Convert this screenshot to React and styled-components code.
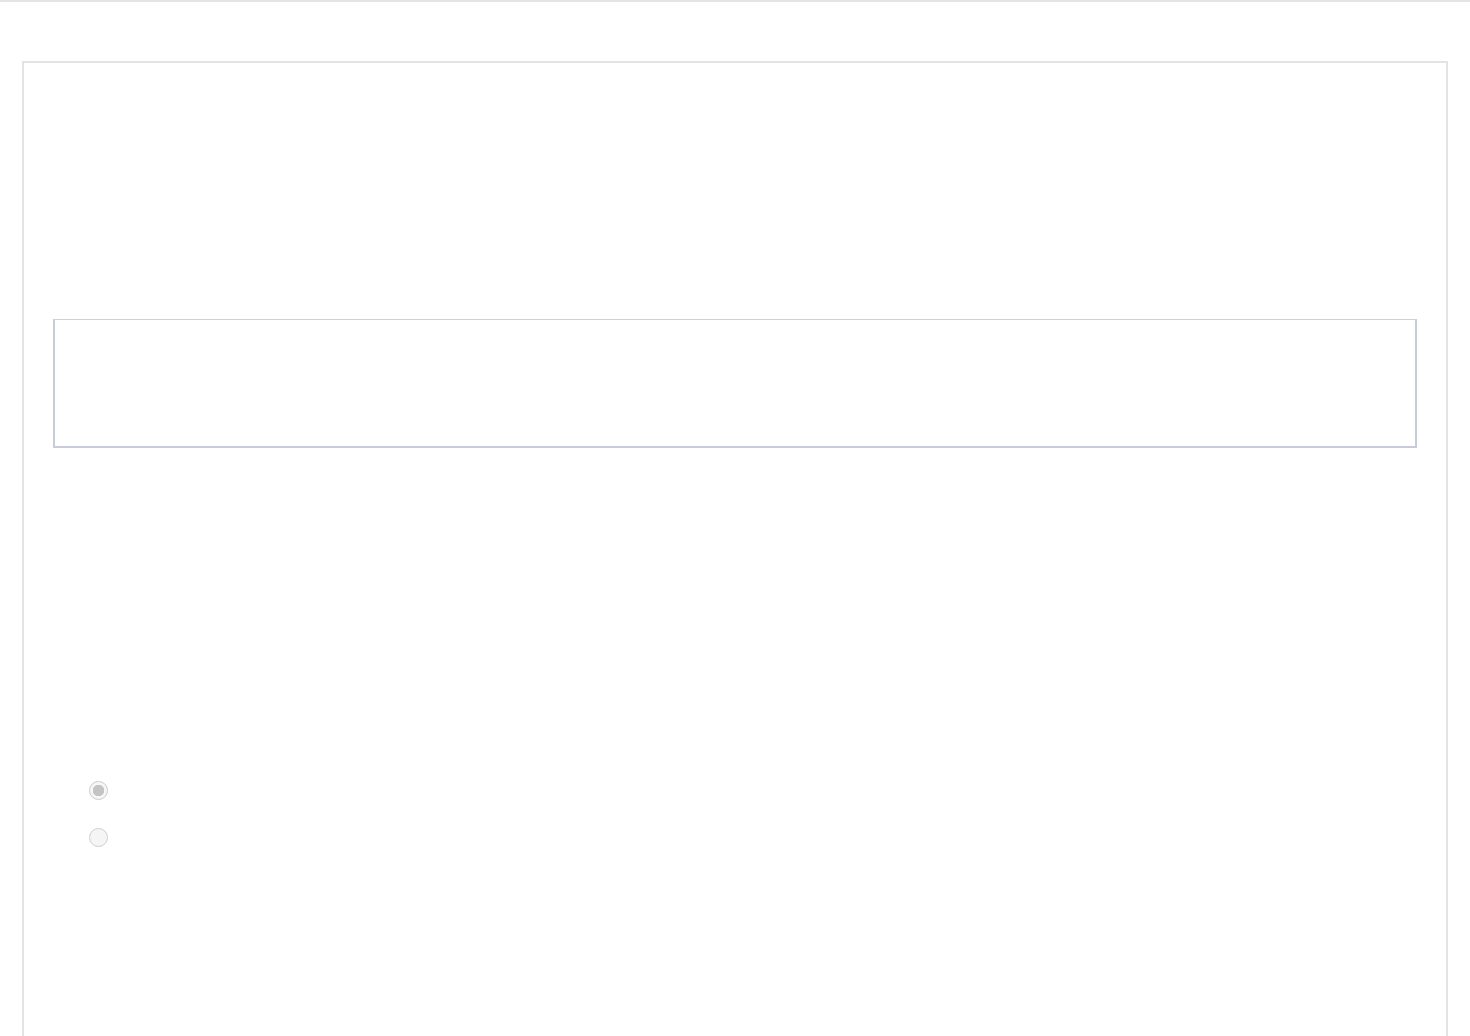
import React from 'react'
import styled, { createGlobalStyle } from 'styled-components';

const GlobalStyle = createGlobalStyle`
  html, body {
    margin: 0;
    padding: 0;
    background: #ffffff;
    font-family: "Liberation Sans", Arial, sans-serif;
    overflow: hidden;
  }
`;

const App = () => {
  return (
    <>
      <GlobalStyle />
      <TopRule />
      <Page>
        <Panel>
          <Field aria-label="field" />
          <RadioGroup>
            <Radio type="radio" name="choice" defaultChecked disabled />
            <Radio type="radio" name="choice" disabled />
          </RadioGroup>
        </Panel>
      </Page>
    </>
  )
}

export default App;


const TopRule = styled.div`
  height: 2px;
  background: #e6e3e3;
`;

const Page = styled.div`
  padding: 59px 22px 0 22px;
`;

const Panel = styled.div`
  box-sizing: border-box;
  min-height: 1000px;
  border: 2px solid #e3e3e3;
  border-bottom: none;
  padding: 256px 29px 0 29px;
`;

const Field = styled.div`
  box-sizing: border-box;
  height: 129px;
  border: 2px solid #c8ccd8;
  border-top: 1px solid #cfd2db;
  background: #ffffff;
`;

const RadioGroup = styled.div`
  display: flex;
  flex-direction: column;
  gap: 28px;
  padding: 333px 0 0 36px;
`;

const Radio = styled.input`
  appearance: none;
  box-sizing: border-box;
  margin: 0;
  width: 19px;
  height: 19px;
  border-radius: 50%;
  border: 1.5px solid #cfcfcf;
  background: #f5f5f5;

  &:checked {
    background: radial-gradient(circle, #c4c4c4 0 5.5px, #f7f7f7 6px);
    border-color: #cbcbcb;
  }
`;
